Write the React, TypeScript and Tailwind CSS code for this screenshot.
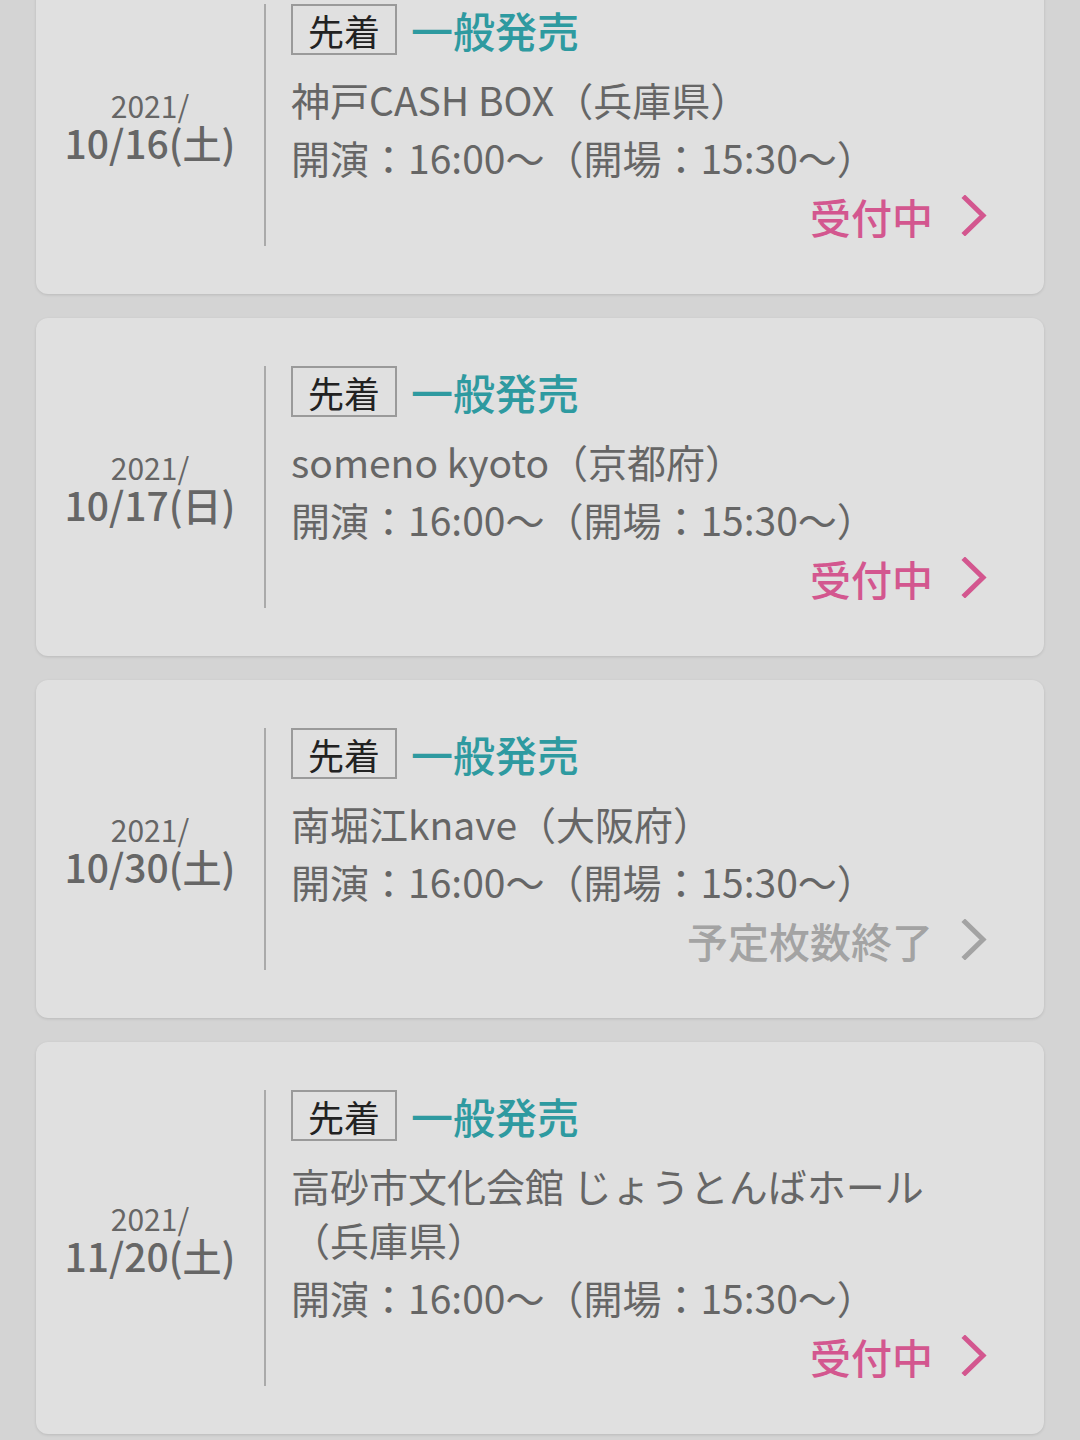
const events = [
  { year: "2021/", date: "10/16(土)", venue: "神戸CASH BOX（兵庫県）", status: "受付中", open: true },
  { year: "2021/", date: "10/17(日)", venue: "someno kyoto（京都府）", status: "受付中", open: true },
  { year: "2021/", date: "10/30(土)", venue: "南堀江knave（大阪府）", status: "予定枚数終了", open: false },
  { year: "2021/", date: "11/20(土)", venue: "高砂市文化会館 じょうとんばホール（兵庫県）", status: "受付中", open: true },
];

function Chevron({ color }: { color: string }) {
  return (
    <svg width="27" height="41" viewBox="0 0 27 41" className="ml-[28px]">
      <path d="M4 3 L22 20.5 L4 38" fill="none" stroke={color} strokeWidth="5" strokeLinecap="square" />
    </svg>
  );
}

function EventCard({ ev }: { ev: (typeof events)[number] }) {
  return (
    <div className="flex rounded-[12px] bg-[#e0e0e0] py-12 shadow-[0_1px_3px_rgba(0,0,0,0.12)]">
      <div className="flex w-[228px] shrink-0 flex-col items-center justify-center text-[#666]">
        <span className="text-[30px] leading-[34px]">{ev.year}</span>
        <span className="text-[39px] font-medium leading-[40px]">{ev.date}</span>
      </div>
      <div className="flex-1 border-l-2 border-[#aaa] pb-[3px] pl-[25px] pr-[56px]">
        <div className="flex h-[51px] items-center">
          <span className="flex h-[51px] items-center border-2 border-[#9a9a9a] px-[15px] text-[36px] leading-none text-[#222]">
            先着
          </span>
          <span className="ml-[14px] text-[42px] font-medium leading-none text-[#2e9aa0]">一般発売</span>
        </div>
        <p className="mt-[17px] text-[39px] leading-[54px] text-[#666]">{ev.venue}</p>
        <p className="mt-[4px] text-[39px] leading-[54px] text-[#666]">開演：16:00～（開場：15:30～）</p>
        <div className="mt-[4px] flex h-[55px] items-center justify-end">
          <span className={`text-[41px] font-medium leading-[54px] ${ev.open ? "text-[#d3578f]" : "text-[#a3a3a3]"}`}>
            {ev.status}
          </span>
          <Chevron color={ev.open ? "#d3578f" : "#a3a3a3"} />
        </div>
      </div>
    </div>
  );
}

export default function App() {
  return (
    <div
      className="min-h-screen overflow-hidden bg-[#d4d4d4] px-[36px]"
      style={{ fontFamily: '"Noto Sans CJK JP", "Noto Sans", sans-serif' }}
    >
      <div className="-mt-[44px] flex flex-col gap-6">
        {events.map((ev) => (
          <EventCard key={ev.date} ev={ev} />
        ))}
      </div>
    </div>
  );
}
